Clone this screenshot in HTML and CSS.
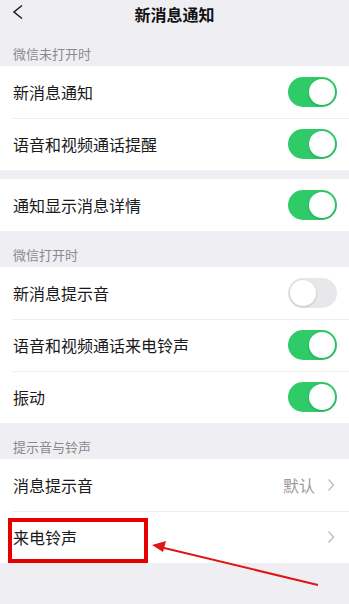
FILE: index.html
```html
<!DOCTYPE html>
<html lang="zh-CN">
<head>
<meta charset="utf-8">
<link rel="stylesheet" href="styles.css">
</head>
<body>
<div class="page">
  <header class="nav">
    <svg class="back" width="13" height="16" viewBox="0 0 13 16"><polyline points="11,1.5 3,8 11,14.5" fill="none" stroke="#222" stroke-width="1.6"/></svg>
    <div class="title">新消息通知</div>
  </header>

  <div class="sec">微信未打开时</div>
  <div class="group">
    <div class="row"><span class="label">新消息通知</span><span class="sw on"></span></div>
    <div class="row"><span class="label">语音和视频通话提醒</span><span class="sw on"></span></div>
  </div>
  <div class="gap"></div>
  <div class="group">
    <div class="row"><span class="label">通知显示消息详情</span><span class="sw on"></span></div>
  </div>

  <div class="sec">微信打开时</div>
  <div class="group">
    <div class="row"><span class="label">新消息提示音</span><span class="sw"></span></div>
    <div class="row"><span class="label">语音和视频通话来电铃声</span><span class="sw on"></span></div>
    <div class="row"><span class="label">振动</span><span class="sw on"></span></div>
  </div>

  <div class="sec">提示音与铃声</div>
  <div class="group">
    <div class="row"><span class="label">消息提示音</span><span class="value">默认</span><svg class="chev" width="8" height="14" viewBox="0 0 8 14"><polyline points="1.5,1.5 6.5,7 1.5,12.5" fill="none" stroke="#bdbdbd" stroke-width="1.4"/></svg></div>
    <div class="row"><span class="label">来电铃声</span><svg class="chev" width="8" height="14" viewBox="0 0 8 14"><polyline points="1.5,1.5 6.5,7 1.5,12.5" fill="none" stroke="#bdbdbd" stroke-width="1.4"/></svg></div>
  </div>

  <div class="mark"></div>
  <svg class="arrow" width="349" height="604" viewBox="0 0 349 604">
    <line x1="318" y1="585" x2="160" y2="547" stroke="#e01515" stroke-width="2"/>
    <polygon points="152,545 166,541 163,552" fill="#e01515"/>
  </svg>
</div>
</body>
</html>
```
FILE: styles.css
```css
* { box-sizing: border-box; }
html, body { margin: 0; padding: 0; }
body {
  background: #efeff3;
  font-family: "Noto Sans CJK SC", "Noto Sans", sans-serif;
  color: #1a1a1a;
}
.page {
  position: relative;
  width: 349px;
  height: 604px;
  overflow: hidden;
}
.nav {
  height: 30px;
  display: flex;
  align-items: center;
  justify-content: center;
  position: relative;
}
.back {
  position: absolute;
  left: 11px;
  top: 4px;
}
.title {
  font-size: 16px;
  font-weight: 700;
  line-height: 28px;
  margin-top: -2px;
  color: #111;
}
.sec {
  height: 36px;
  display: flex;
  align-items: flex-end;
  padding: 0 0 4px 13px;
  font-size: 13px;
  line-height: 16px;
  color: #8a8a8a;
}
.gap { height: 9px; }
.group {
  background: #fff;
}
.row {
  height: 52px;
  display: flex;
  align-items: center;
  padding: 0 12px 0 13px;
  position: relative;
}
.row + .row::before {
  content: "";
  position: absolute;
  left: 13px;
  right: 0;
  top: 0;
  height: 1px;
  background: #ececec;
}
.label {
  flex: 1;
  font-size: 16px;
  line-height: 20px;
}
.value {
  font-size: 16px;
  color: #9b9b9b;
  margin-right: 12px;
}
.chev { margin-right: 2px; }
.sw {
  width: 49px;
  height: 30px;
  border-radius: 15px;
  background: #e8e8ea;
  position: relative;
}
.sw::after {
  content: "";
  position: absolute;
  top: 2px;
  left: 2px;
  width: 26px;
  height: 26px;
  border-radius: 50%;
  background: #fff;
  box-shadow: 0 1px 3px rgba(0,0,0,0.18);
}
.sw.on { background: #2ecb68; }
.sw.on::after { left: 21px; }
.mark {
  position: absolute;
  left: 8px;
  top: 518px;
  width: 140px;
  height: 45px;
  border: 4px solid #e60000;
}
.arrow {
  position: absolute;
  left: 0;
  top: 0;
  pointer-events: none;
}
```
